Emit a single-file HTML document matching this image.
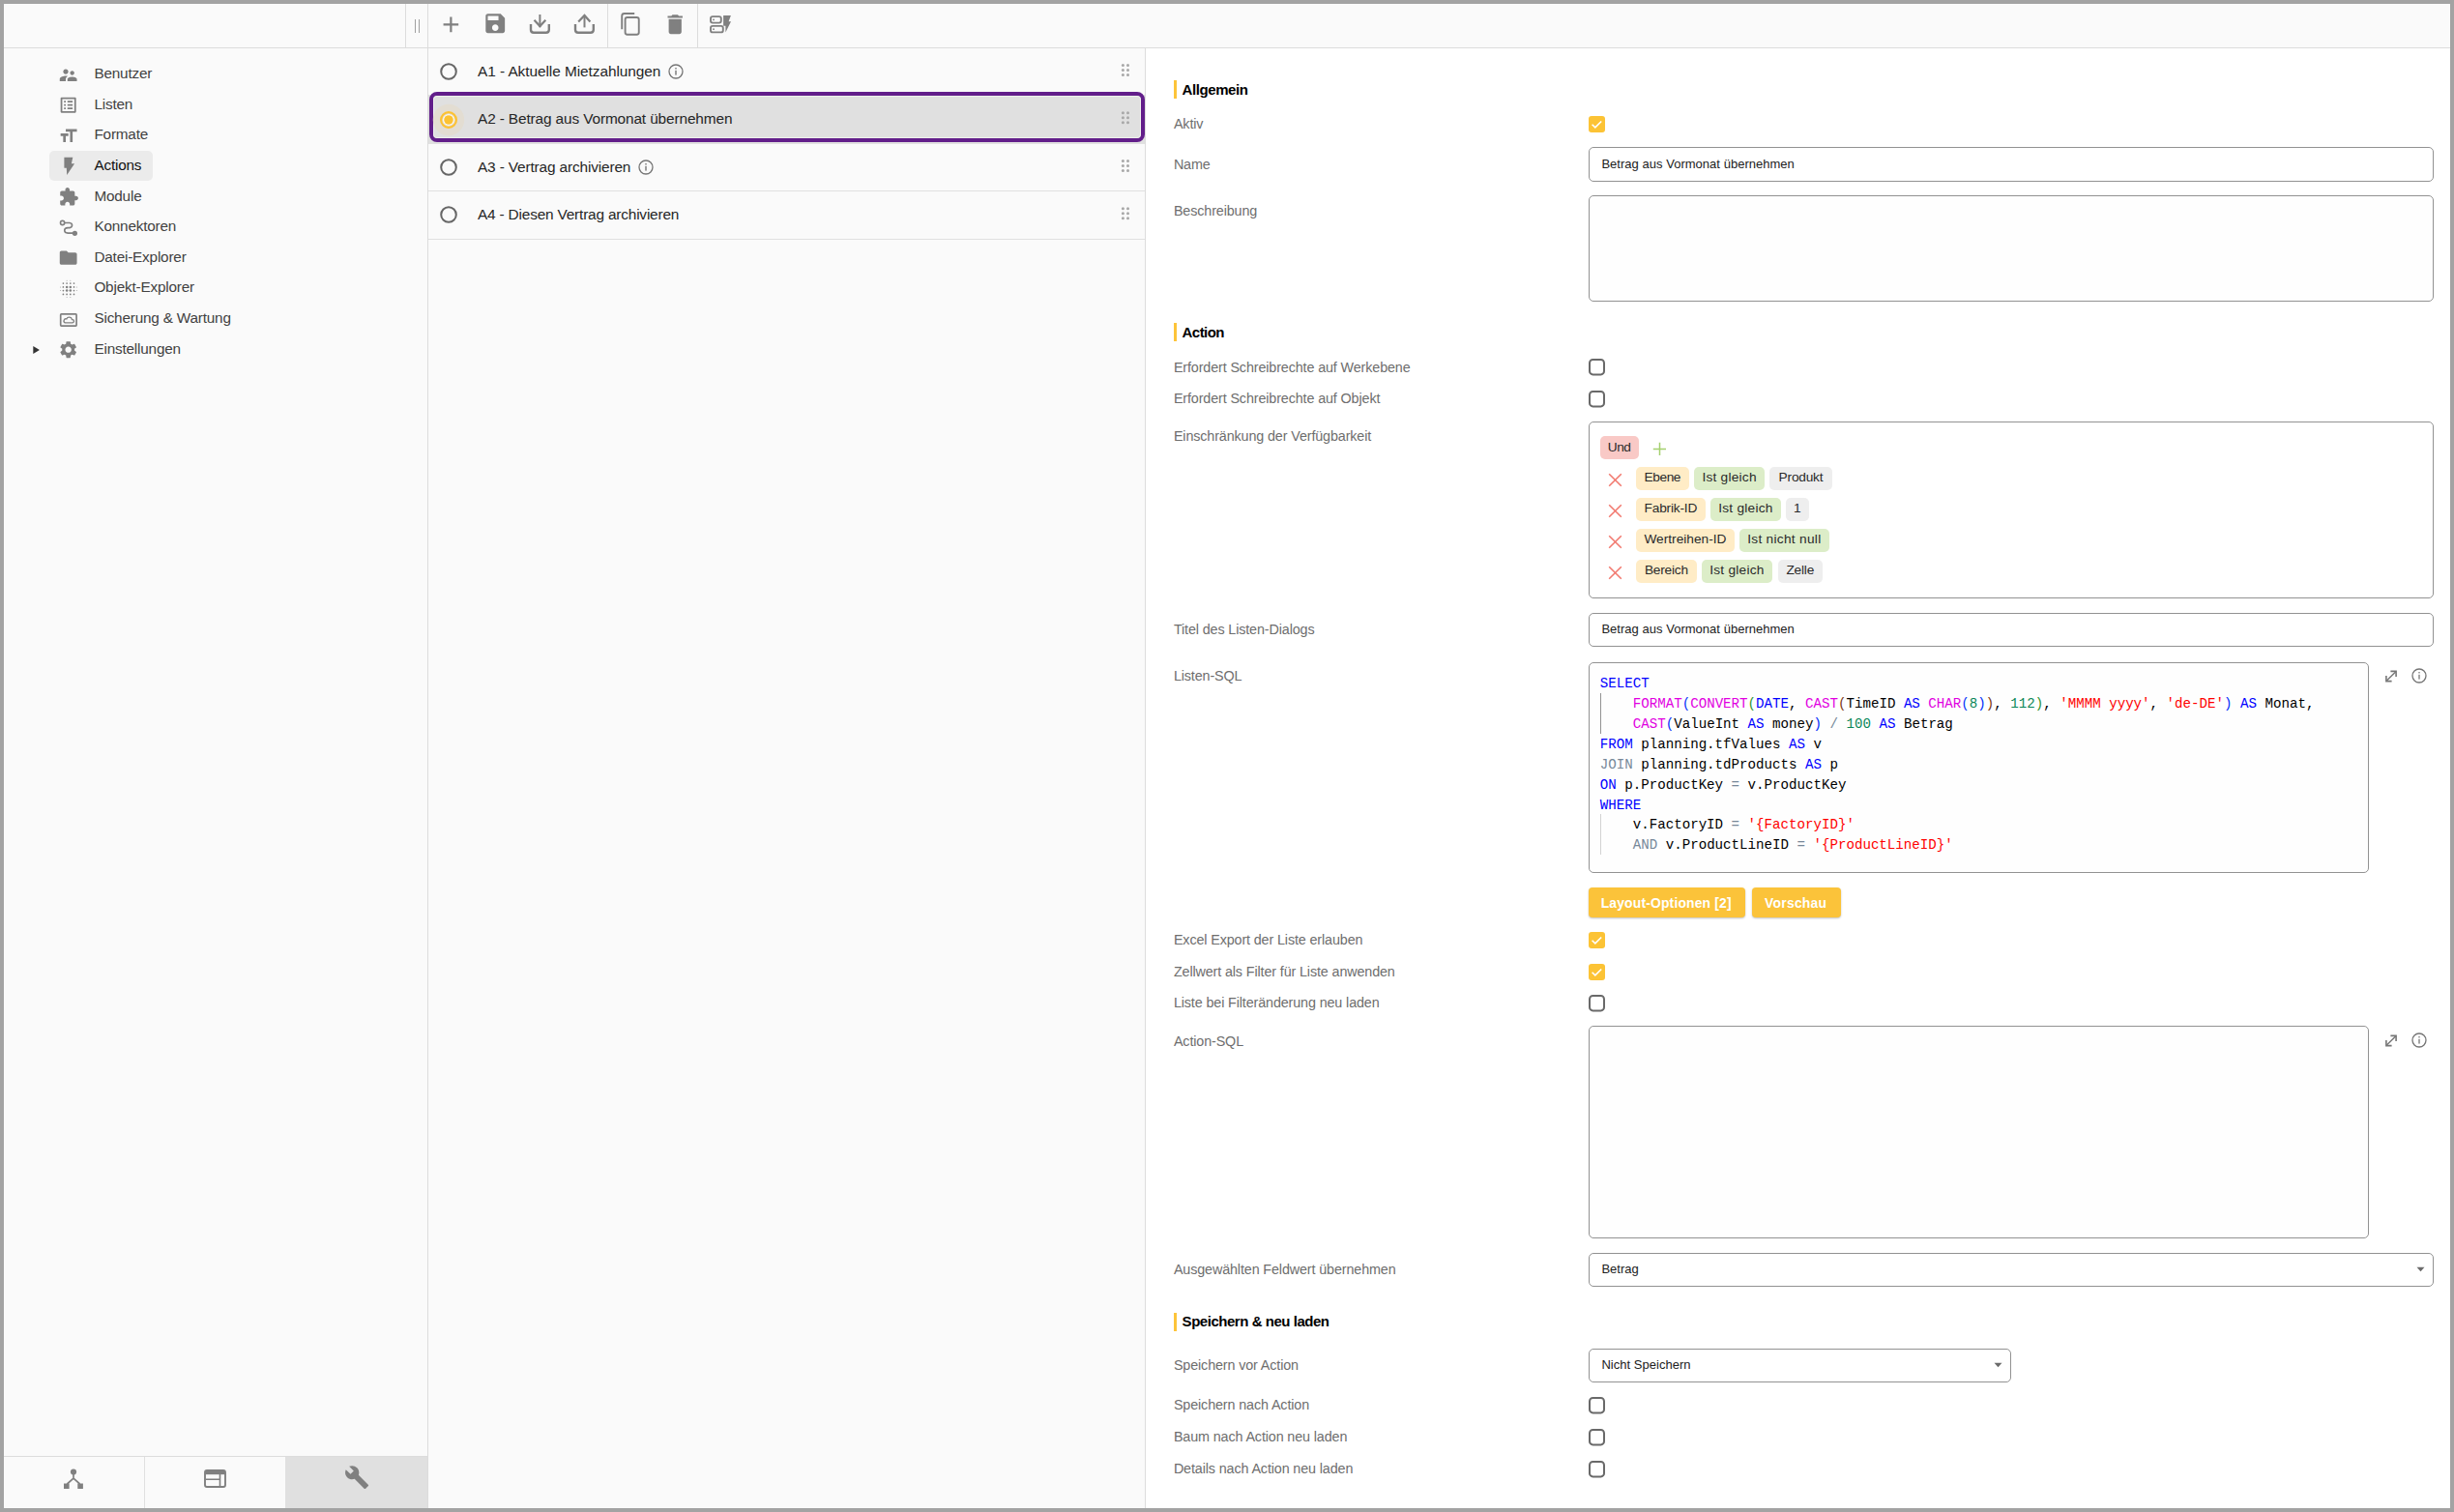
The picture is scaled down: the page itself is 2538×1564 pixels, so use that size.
<!DOCTYPE html>
<html><head><meta charset="utf-8"><style>
html,body{margin:0;padding:0;width:2538px;height:1564px;overflow:hidden;background:#a3a3a3;}
body{position:relative;font-family:"Liberation Sans",sans-serif;}
.b{position:absolute;}
.t{position:absolute;white-space:pre;line-height:0;}
svg.b{overflow:visible}
</style></head><body>
<div class="b" style="left:4px;top:4px;width:2530px;height:1556px;background:#ffffff"></div>
<div class="b" style="left:4px;top:4px;width:439px;height:1556px;background:#fafafa"></div>
<div class="b" style="left:443px;top:4px;width:741px;height:1556px;background:#fafafa"></div>
<div class="b" style="left:4px;top:4px;width:2530px;height:45px;background:#fafafa"></div>
<div class="b" style="left:4px;top:49px;width:2530px;height:1px;background:#dcdcdc"></div>
<div class="b" style="left:419px;top:4px;width:1px;height:45px;background:#dcdcdc"></div>
<div class="b" style="left:442px;top:4px;width:1px;height:1556px;background:#dcdcdc"></div>
<div class="b" style="left:628px;top:4px;width:1px;height:45px;background:#dcdcdc"></div>
<div class="b" style="left:721px;top:4px;width:1px;height:45px;background:#dcdcdc"></div>
<div class="b" style="left:1184px;top:50px;width:1px;height:1510px;background:#dcdcdc"></div>
<div class="b" style="left:429px;top:20px;width:1px;height:14px;background:#a0a0a0"></div>
<div class="b" style="left:433px;top:20px;width:1px;height:14px;background:#a0a0a0"></div>
<svg class="b" style="left:452.6px;top:11.8px" width="27" height="27" viewBox="0 0 24.24 24.24"><path fill="#808080" d="M19 13h-6v6h-2v-6H5v-2h6V5h2v6h6v2z"/></svg>
<svg class="b" style="left:498.8px;top:11.1px" width="27" height="27" viewBox="0 0 24.5 24.5"><path fill="#808080" d="M17 3H5c-1.11 0-2 .9-2 2v14c0 1.1.89 2 2 2h14c1.1 0 2-.9 2-2V7l-4-4zm-5 16c-1.66 0-3-1.34-3-3s1.34-3 3-3 3 1.34 3 3-1.34 3-3 3zm3-10H5V5h10v4z"/></svg>
<svg class="b" style="left:544px;top:10px" width="30" height="30" viewBox="0 0 30 30"><g fill="none" stroke="#808080" stroke-width="2"><path d="M14.4 5v13.2"/><path d="M8.5 10.8l5.9 6.3 5.9-6.3" stroke-width="2.2"/><path d="M5 15v5.7q0 3 3 3h12.8q3 0 3-3V15" stroke-width="2.4"/></g></svg>
<svg class="b" style="left:590px;top:10px" width="30" height="30" viewBox="0 0 30 30"><g fill="none" stroke="#808080" stroke-width="2"><path d="M14.5 6v12.4"/><path d="M8.2 12.5l6.3-6.6 5.9 6.6" stroke-width="2.2"/><path d="M5 15v5.7q0 3 3 3h12.8q3 0 3-3V15" stroke-width="2.4"/></g></svg>
<svg class="b" style="left:636px;top:8px" width="30" height="32" viewBox="0 0 30 32"><g fill="none" stroke="#808080" stroke-width="1.9"><path d="M7.2 22.2V8.5q0-2.5 2.5-2.5h10.5"/><rect x="10.6" y="10" width="14.15" height="17.75" rx="2.2"/></g></svg>
<svg class="b" style="left:684.8px;top:11.5px" width="27" height="27" viewBox="0 0 24.5 24.5"><path fill="#808080" d="M6 19c0 1.1.9 2 2 2h8c1.1 0 2-.9 2-2V7H6v12zM19 4h-3.5l-1-1h-5l-1 1H5v2h14V4z"/></svg>
<svg class="b" style="left:730px;top:12px" width="30" height="26" viewBox="0 0 30 26"><g fill="none" stroke="#808080" stroke-width="1.9"><rect x="5" y="5.1" width="10.8" height="6.5" rx="2"/><rect x="5" y="14.9" width="12.8" height="6.5" rx="2"/></g><rect x="7.2" y="7.6" width="1.6" height="1.6" fill="#808080"/><rect x="7.2" y="17.4" width="1.6" height="1.6" fill="#808080"/><path fill="#808080" d="M18.1 4.1h7.8l-2.3 6.2h2.4l-5.6 11.1v-6.6h-2.3z"/></svg>
<div class="b" style="left:51px;top:156px;width:107px;height:31px;background:#ebebeb;border-radius:5px"></div>
<div class="t" style="left:97.40px;top:76.10px;font-size:15.3px;color:#424242;letter-spacing:-0.183px;">Benutzer</div>
<div class="t" style="left:97.40px;top:107.70px;font-size:15.3px;color:#424242;letter-spacing:-0.183px;">Listen</div>
<div class="t" style="left:97.40px;top:139.30px;font-size:15.3px;color:#424242;letter-spacing:-0.183px;">Formate</div>
<div class="t" style="left:97.40px;top:170.90px;font-size:15.3px;color:#111111;letter-spacing:-0.183px;">Actions</div>
<div class="t" style="left:97.40px;top:202.50px;font-size:15.3px;color:#424242;letter-spacing:-0.183px;">Module</div>
<div class="t" style="left:97.40px;top:234.10px;font-size:15.3px;color:#424242;letter-spacing:-0.183px;">Konnektoren</div>
<div class="t" style="left:97.40px;top:265.70px;font-size:15.3px;color:#424242;letter-spacing:-0.183px;">Datei-Explorer</div>
<div class="t" style="left:97.40px;top:297.30px;font-size:15.3px;color:#424242;letter-spacing:-0.183px;">Objekt-Explorer</div>
<div class="t" style="left:97.40px;top:328.90px;font-size:15.3px;color:#424242;letter-spacing:-0.183px;">Sicherung &amp; Wartung</div>
<div class="t" style="left:97.40px;top:360.50px;font-size:15.3px;color:#424242;letter-spacing:-0.183px;">Einstellungen</div>
<svg class="b" style="left:60.332px;top:66.632px" width="21.34" height="21.34" viewBox="0 0 24 24"><path fill="#808080" d="M16.5 12c1.38 0 2.49-1.12 2.49-2.5S17.88 7 16.5 7C15.12 7 14 8.12 14 9.5s1.12 2.5 2.5 2.5zM9 11c1.66 0 2.99-1.34 2.99-3S10.66 5 9 5C7.34 5 6 6.34 6 8s1.34 3 3 3zm7.5 3c-1.83 0-5.5.92-5.5 2.75V19h11v-2.25c0-1.830-3.67-2.75-5.5-2.75zM9 13c-2.33 0-7 1.17-7 3.5V19h7v-2.25c0-.85.33-2.34 2.37-3.47C10.5 13.1 9.66 13 9 13z"/></svg>
<svg class="b" style="left:60.332px;top:98.232px" width="21.34" height="21.34" viewBox="0 0 24 24"><path fill="#808080" d="M19 5v14H5V5h14m1.1-2H3.9c-.5 0-.9.4-.9.9v16.2c0 .4.4.9.9.9h16.2c.4 0 .9-.5.9-.9V3.9c0-.5-.5-.9-.9-.9zM11 7h6v2h-6V7zm0 4h6v2h-6v-2zm0 4h6v2h-6zM7 7h2v2H7zm0 4h2v2H7zm0 4h2v2H7z"/></svg>
<svg class="b" style="left:60.332px;top:129.832px" width="21.34" height="21.34" viewBox="0 0 24 24"><path fill="#808080" d="M9 4v3h5v12h3V7h5V4H9zm-6 8h3v7h3v-7h3V9H3v3z"/></svg>
<svg class="b" style="left:0;top:0" width="443" height="400" viewBox="0 0 443 400"><polygon fill="#808080" points="66.4,162.7 75.3,162.7 73.9,169.3 77.1,169.3 69.2,180.9 68.8,173.75 66.4,173.75"/></svg>
<svg class="b" style="left:60.332px;top:193.03199999999998px" width="21.34" height="21.34" viewBox="-0.5 0 24 24"><path fill="#808080" d="M20.5 11H19V7c0-1.1-.9-2-2-2h-4V3.5C13 2.12 11.88 1 10.5 1S8 2.12 8 3.5V5H4c-1.1 0-1.99.9-1.99 2v3.8H3.5c1.49 0 2.7 1.21 2.7 2.7s-1.21 2.7-2.7 2.7H2V20c0 1.1.9 2 2 2h3.8v-1.5c0-1.49 1.21-2.7 2.7-2.7 1.49 0 2.7 1.21 2.7 2.7V22H17c1.1 0 2-.9 2-2v-4h1.5c1.38 0 2.5-1.12 2.5-2.5S21.88 11 20.5 11z"/></svg>
<svg class="b" style="left:0;top:0" width="443" height="400" viewBox="0 0 443 400"><g fill="none" stroke="#808080" stroke-width="1.6"><circle cx="64.6" cy="230.5" r="2.1"/><path d="M66.7 230.5h5.2a3.3 2.6 0 0 1 0 5.1h-1.8a3.3 2.7 0 0 0 0 5.5h5.6"/></g><circle cx="77.4" cy="241.3" r="2.6" fill="#808080"/></svg>
<svg class="b" style="left:60.332px;top:256.232px" width="21.34" height="21.34" viewBox="0 0 24 24"><path fill="#808080" d="M10 4H4c-1.1 0-1.99.9-1.99 2L2 18c0 1.1.9 2 2 2h16c1.1 0 2-.9 2-2V8c0-1.1-.9-2-2-2h-8l-2-2z"/></svg>
<svg class="b" style="left:0;top:0" width="443" height="400" viewBox="0 0 443 400"><circle cx="65.4" cy="293.1" r="0.85" fill="#808080"/><circle cx="65.4" cy="296.9" r="0.85" fill="#808080"/><circle cx="65.4" cy="300.6" r="0.85" fill="#808080"/><circle cx="65.4" cy="304.4" r="0.85" fill="#808080"/><circle cx="69.1" cy="293.1" r="0.85" fill="#808080"/><circle cx="69.1" cy="296.9" r="1.25" fill="#808080"/><circle cx="69.1" cy="300.6" r="1.25" fill="#808080"/><circle cx="69.1" cy="304.4" r="0.85" fill="#808080"/><circle cx="72.8" cy="293.1" r="0.85" fill="#808080"/><circle cx="72.8" cy="296.9" r="1.25" fill="#808080"/><circle cx="72.8" cy="300.6" r="1.25" fill="#808080"/><circle cx="72.8" cy="304.4" r="0.85" fill="#808080"/><circle cx="76.5" cy="293.1" r="0.85" fill="#808080"/><circle cx="76.5" cy="296.9" r="0.85" fill="#808080"/><circle cx="76.5" cy="300.6" r="0.85" fill="#808080"/><circle cx="76.5" cy="304.4" r="0.85" fill="#808080"/><circle cx="69.1" cy="290.2" r="0.5" fill="#808080" opacity="0.7"/><circle cx="72.8" cy="290.2" r="0.5" fill="#808080" opacity="0.7"/><circle cx="69.1" cy="307.4" r="0.5" fill="#808080" opacity="0.7"/><circle cx="72.8" cy="307.4" r="0.5" fill="#808080" opacity="0.7"/><circle cx="62.5" cy="296.9" r="0.5" fill="#808080" opacity="0.7"/><circle cx="62.5" cy="300.6" r="0.5" fill="#808080" opacity="0.7"/><circle cx="79.4" cy="296.9" r="0.5" fill="#808080" opacity="0.7"/><circle cx="79.4" cy="300.6" r="0.5" fill="#808080" opacity="0.7"/></svg>
<svg class="b" style="left:0;top:0" width="443" height="400" viewBox="0 0 443 400"><rect x="62.7" y="324.9" width="16.4" height="12.2" rx="0.8" fill="none" stroke="#808080" stroke-width="1.7"/><path d="M67.3 333.8h7.6a1.6 1.6 0 0 0 0-3.2h-.4a3 3 0 0 0-5.7-0.6a1.9 1.9 0 0 0-1.5 3.8z" fill="none" stroke="#808080" stroke-width="1.3"/></svg>
<svg class="b" style="left:60.332px;top:351.03200000000004px" width="21.34" height="21.34" viewBox="0 0 24 24"><path fill="#808080" d="M19.14 12.94c.04-.3.06-.61.06-.94 0-.32-.02-.64-.07-.94l2.03-1.58c.18-.14.23-.41.12-.61l-1.92-3.32c-.12-.22-.37-.29-.59-.22l-2.39.96c-.5-.38-1.03-.7-1.62-.94l-.36-2.54c-.04-.24-.24-.41-.48-.41h-3.84c-.24 0-.43.17-.47.41l-.36 2.54c-.59.24-1.13.57-1.62.94l-2.39-.96c-.22-.08-.47 0-.59.22L2.74 8.87c-.12.21-.08.47.12.61l2.03 1.58c-.05.3-.09.63-.09.94s.02.64.07.94l-2.03 1.58c-.18.14-.23.41-.12.61l1.92 3.32c.12.22.37.29.59.22l2.39-.96c.5.38 1.03.7 1.62.94l.36 2.54c.05.24.24.41.48.41h3.84c.24 0 .44-.17.47-.41l.36-2.54c.59-.24 1.13-.56 1.62-.94l2.39.96c.22.08.47 0 .59-.22l1.92-3.32c.12-.22.07-.47-.12-.61l-2.01-1.58zM12 15.6c-1.98 0-3.6-1.62-3.6-3.6s1.62-3.6 3.6-3.6 3.6 1.62 3.6 3.6-1.62 3.6-3.6 3.6z"/></svg>
<svg class="b" style="left:0;top:0" width="443" height="400" viewBox="0 0 443 400"><polygon fill="#333" points="34.3,357.9 40.9,362 34.3,366.1"/></svg>
<div class="b" style="left:4px;top:1506px;width:438px;height:1px;background:#dcdcdc"></div>
<div class="b" style="left:149px;top:1507px;width:1px;height:53px;background:#e0e0e0"></div>
<div class="b" style="left:295px;top:1507px;width:147px;height:53px;background:#e0e0e0"></div>
<svg class="b" style="left:0;top:1500px" width="443" height="60" viewBox="0 1500 443 60"><circle cx="76" cy="1522.5" r="3.1" fill="#808080"/><path d="M76 1524v5.2l-6.6 5.8M76 1529.2l6.6 5.8" fill="none" stroke="#808080" stroke-width="1.7"/><rect x="66" y="1534.5" width="5.6" height="5.5" fill="#808080"/><rect x="80.3" y="1534.5" width="5.6" height="5.5" fill="#808080"/></svg>
<svg class="b" style="left:0;top:1500px" width="443" height="60" viewBox="0 1500 443 60"><rect x="212" y="1521" width="21" height="17" rx="2" fill="none" stroke="#808080" stroke-width="1.9"/><rect x="212" y="1521" width="21" height="4.2" fill="#808080"/><path d="M213 1530.3h14.5M227.5 1525v13" stroke="#808080" stroke-width="1.6"/></svg>
<svg class="b" style="left:355.9px;top:1515px" width="26.2" height="26.2" viewBox="0 0 24 24"><path fill="#808080" d="M22.7 19l-9.1-9.1c.9-2.3.4-5-1.5-6.9-2-2-5-2.4-7.4-1.3L9 6 6 9 1.6 4.7C.4 7.1.9 10.1 2.9 12.1c1.9 1.9 4.6 2.4 6.9 1.5l9.1 9.1c.4.4 1 .4 1.4 0l2.3-2.3c.5-.4.5-1.1.1-1.4z"/></svg>
<div class="b" style="left:443px;top:98px;width:741px;height:50px;background:#e0e0e0"></div>
<div class="b" style="left:443px;top:148px;width:741px;height:1px;background:#e0e0e0"></div>
<div class="b" style="left:443px;top:197px;width:741px;height:1px;background:#e0e0e0"></div>
<div class="b" style="left:443px;top:247px;width:741px;height:1px;background:#e0e0e0"></div>
<div class="b" style="left:444px;top:95px;width:740px;height:52px;box-sizing:border-box;border:4px solid #621e8a;border-radius:8px"></div>
<div class="b" style="left:448px;top:99px;width:732px;height:44px;box-sizing:border-box;border:1px solid #eef0ec;border-radius:4px"></div>
<svg class="b" style="left:444px;top:54.1px" width="40" height="40" viewBox="-20 -20 40 40"><circle r="7.8" fill="none" stroke="#666" stroke-width="2"/></svg>
<div class="t" style="left:494.00px;top:73.76px;font-size:15.4px;color:#262626;letter-spacing:-0.053px;">A1 - Aktuelle Mietzahlungen</div>
<svg class="b" style="left:689.4px;top:64.1px" width="20" height="20" viewBox="-10 -10 20 20"><circle r="7" fill="none" stroke="#757575" stroke-width="1.3"/><rect x="-0.7" y="-1.2" width="1.4" height="4.8" fill="#757575"/><rect x="-0.7" y="-4" width="1.4" height="1.5" fill="#757575"/></svg>
<svg class="b" style="left:0;top:0" width="1184" height="260" viewBox="0 0 1184 260"><circle cx="1161.4" cy="67.5" r="1.5" fill="#a8a8a8"/><circle cx="1161.4" cy="72.5" r="1.5" fill="#a8a8a8"/><circle cx="1161.4" cy="77.5" r="1.5" fill="#a8a8a8"/><circle cx="1166.5" cy="67.5" r="1.5" fill="#a8a8a8"/><circle cx="1166.5" cy="72.5" r="1.5" fill="#a8a8a8"/><circle cx="1166.5" cy="77.5" r="1.5" fill="#a8a8a8"/></svg>
<svg class="b" style="left:444px;top:104.0px" width="40" height="40" viewBox="-20 -20 40 40"><circle r="16.2" fill="#e3ddd2"/><circle r="7.9" fill="none" stroke="#fcc233" stroke-width="2.2"/><circle r="5.8" fill="#fff"/><circle r="4.8" fill="#fcc233"/></svg>
<div class="t" style="left:494.00px;top:123.06px;font-size:15.4px;color:#262626;letter-spacing:-0.128px;">A2 - Betrag aus Vormonat übernehmen</div>
<svg class="b" style="left:0;top:0" width="1184" height="260" viewBox="0 0 1184 260"><circle cx="1161.4" cy="116.8" r="1.5" fill="#a8a8a8"/><circle cx="1161.4" cy="121.8" r="1.5" fill="#a8a8a8"/><circle cx="1161.4" cy="126.8" r="1.5" fill="#a8a8a8"/><circle cx="1166.5" cy="116.8" r="1.5" fill="#a8a8a8"/><circle cx="1166.5" cy="121.8" r="1.5" fill="#a8a8a8"/><circle cx="1166.5" cy="126.8" r="1.5" fill="#a8a8a8"/></svg>
<svg class="b" style="left:444px;top:153.0px" width="40" height="40" viewBox="-20 -20 40 40"><circle r="7.8" fill="none" stroke="#666" stroke-width="2"/></svg>
<div class="t" style="left:494.00px;top:172.66px;font-size:15.4px;color:#262626;letter-spacing:-0.142px;">A3 - Vertrag archivieren</div>
<svg class="b" style="left:658.0px;top:163.0px" width="20" height="20" viewBox="-10 -10 20 20"><circle r="7" fill="none" stroke="#757575" stroke-width="1.3"/><rect x="-0.7" y="-1.2" width="1.4" height="4.8" fill="#757575"/><rect x="-0.7" y="-4" width="1.4" height="1.5" fill="#757575"/></svg>
<svg class="b" style="left:0;top:0" width="1184" height="260" viewBox="0 0 1184 260"><circle cx="1161.4" cy="166.4" r="1.5" fill="#a8a8a8"/><circle cx="1161.4" cy="171.4" r="1.5" fill="#a8a8a8"/><circle cx="1161.4" cy="176.4" r="1.5" fill="#a8a8a8"/><circle cx="1166.5" cy="166.4" r="1.5" fill="#a8a8a8"/><circle cx="1166.5" cy="171.4" r="1.5" fill="#a8a8a8"/><circle cx="1166.5" cy="176.4" r="1.5" fill="#a8a8a8"/></svg>
<svg class="b" style="left:444px;top:202.3px" width="40" height="40" viewBox="-20 -20 40 40"><circle r="7.8" fill="none" stroke="#666" stroke-width="2"/></svg>
<div class="t" style="left:494.00px;top:221.96px;font-size:15.4px;color:#262626;letter-spacing:-0.183px;">A4 - Diesen Vertrag archivieren</div>
<svg class="b" style="left:0;top:0" width="1184" height="260" viewBox="0 0 1184 260"><circle cx="1161.4" cy="215.7" r="1.5" fill="#a8a8a8"/><circle cx="1161.4" cy="220.7" r="1.5" fill="#a8a8a8"/><circle cx="1161.4" cy="225.7" r="1.5" fill="#a8a8a8"/><circle cx="1166.5" cy="215.7" r="1.5" fill="#a8a8a8"/><circle cx="1166.5" cy="220.7" r="1.5" fill="#a8a8a8"/><circle cx="1166.5" cy="225.7" r="1.5" fill="#a8a8a8"/></svg>
<div class="b" style="left:1214px;top:83px;width:3px;height:19px;background:#fdc43a"></div>
<div class="t" style="left:1222.60px;top:92.80px;font-size:15.0px;color:#000;font-weight:bold;letter-spacing:-0.425px;">Allgemein</div>
<div class="b" style="left:1214px;top:334px;width:3px;height:19px;background:#fdc43a"></div>
<div class="t" style="left:1222.60px;top:344.30px;font-size:15.0px;color:#000;font-weight:bold;letter-spacing:-0.570px;">Action</div>
<div class="b" style="left:1214px;top:1358px;width:3px;height:19px;background:#fdc43a"></div>
<div class="t" style="left:1222.60px;top:1367.30px;font-size:15.0px;color:#000;font-weight:bold;letter-spacing:-0.465px;">Speichern &amp; neu laden</div>
<div class="t" style="left:1213.90px;top:128.02px;font-size:14.35px;color:#6e6e6e;letter-spacing:-0.125px;">Aktiv</div>
<svg class="b" style="left:1643px;top:120.0px" width="17" height="17" viewBox="0 0 17 17"><rect width="17" height="17" rx="3" fill="#fcc335"/><path d="M3.6 8.8l3.2 3.1 6.4-6.4" fill="none" stroke="#fff" stroke-width="1.6"/></svg>
<div class="t" style="left:1213.90px;top:170.42px;font-size:14.35px;color:#6e6e6e;letter-spacing:-0.125px;">Name</div>
<div class="b" style="left:1643px;top:152px;width:874px;height:36px;box-sizing:border-box;border:1px solid #929292;border-radius:5px;background:#fff"></div>
<div class="t" style="left:1656.40px;top:170.49px;font-size:13.0px;color:#212121;letter-spacing:0.025px;">Betrag aus Vormonat übernehmen</div>
<div class="t" style="left:1213.90px;top:218.32px;font-size:14.35px;color:#6e6e6e;letter-spacing:-0.125px;">Beschreibung</div>
<div class="b" style="left:1643px;top:202px;width:874px;height:110px;box-sizing:border-box;border:1px solid #929292;border-radius:5px;background:#fefefe"></div>
<div class="t" style="left:1213.90px;top:380.22px;font-size:14.35px;color:#6e6e6e;letter-spacing:-0.125px;">Erfordert Schreibrechte auf Werkebene</div>
<svg class="b" style="left:1643px;top:371.3px" width="17" height="17.4" viewBox="0 0 17 17.4"><rect x="1" y="1" width="15" height="15.4" rx="3.4" fill="#fff" stroke="#696969" stroke-width="2"/></svg>
<div class="t" style="left:1213.90px;top:411.82px;font-size:14.35px;color:#6e6e6e;letter-spacing:-0.125px;">Erfordert Schreibrechte auf Objekt</div>
<svg class="b" style="left:1643px;top:403.6px" width="17" height="17.4" viewBox="0 0 17 17.4"><rect x="1" y="1" width="15" height="15.4" rx="3.4" fill="#fff" stroke="#696969" stroke-width="2"/></svg>
<div class="t" style="left:1213.90px;top:450.52px;font-size:14.35px;color:#6e6e6e;letter-spacing:-0.125px;">Einschränkung der Verfügbarkeit</div>
<div class="b" style="left:1643px;top:436px;width:874px;height:183px;box-sizing:border-box;border:1px solid #929292;border-radius:5px;background:#fff"></div>
<div class="b" style="left:1655px;top:451.2px;width:40px;height:23.5px;background:#f9c9c6;border-radius:5px"></div>
<div class="t" style="left:1662.70px;top:463.25px;font-size:13.7px;color:#2a2a2a;letter-spacing:-0.420px;">Und</div>
<svg class="b" style="left:1708px;top:456px" width="17" height="17" viewBox="0 0 17 17"><path d="M8.5 1.8v13.2M1.8 8.5h13.2" stroke="#a5d06f" stroke-width="1.5"/></svg>
<svg class="b" style="left:1662px;top:488.0px" width="17" height="17" viewBox="0 0 17 17"><path d="M2.2 2.2l12.6 12.6M14.8 2.2L2.2 14.8" stroke="#f27a70" stroke-width="1.6"/></svg>
<div class="b" style="left:1692.2px;top:483.2px;width:54.7px;height:23.5px;background:#ffecc6;border-radius:5px"></div>
<div class="t" style="left:1700.40px;top:494.05px;font-size:13.7px;color:#2a2a2a;letter-spacing:-0.373px;">Ebene</div>
<div class="b" style="left:1752.2px;top:483.2px;width:72.7px;height:23.5px;background:#dcedc8;border-radius:5px"></div>
<div class="t" style="left:1760.40px;top:494.05px;font-size:13.7px;color:#2a2a2a;letter-spacing:0.239px;">Ist gleich</div>
<div class="b" style="left:1830.2px;top:483.2px;width:64.8px;height:23.5px;background:#eeeeee;border-radius:5px"></div>
<div class="t" style="left:1839.60px;top:494.05px;font-size:13.7px;color:#2a2a2a;letter-spacing:-0.200px;">Produkt</div>
<svg class="b" style="left:1662px;top:520.1px" width="17" height="17" viewBox="0 0 17 17"><path d="M2.2 2.2l12.6 12.6M14.8 2.2L2.2 14.8" stroke="#f27a70" stroke-width="1.6"/></svg>
<div class="b" style="left:1692.2px;top:515.3px;width:71.5px;height:23.5px;background:#ffecc6;border-radius:5px"></div>
<div class="t" style="left:1700.60px;top:526.15px;font-size:13.7px;color:#2a2a2a;letter-spacing:-0.200px;">Fabrik-ID</div>
<div class="b" style="left:1769.0px;top:515.3px;width:72.7px;height:23.5px;background:#dcedc8;border-radius:5px"></div>
<div class="t" style="left:1777.20px;top:526.15px;font-size:13.7px;color:#2a2a2a;letter-spacing:0.239px;">Ist gleich</div>
<div class="b" style="left:1847.0px;top:515.3px;width:23.8px;height:23.5px;background:#eeeeee;border-radius:5px"></div>
<div class="t" style="left:1855.10px;top:526.15px;font-size:13.7px;color:#2a2a2a;">1</div>
<svg class="b" style="left:1662px;top:551.8px" width="17" height="17" viewBox="0 0 17 17"><path d="M2.2 2.2l12.6 12.6M14.8 2.2L2.2 14.8" stroke="#f27a70" stroke-width="1.6"/></svg>
<div class="b" style="left:1692.2px;top:547.0px;width:101.5px;height:23.5px;background:#ffecc6;border-radius:5px"></div>
<div class="t" style="left:1700.40px;top:557.85px;font-size:13.7px;color:#2a2a2a;letter-spacing:0.008px;">Wertreihen-ID</div>
<div class="b" style="left:1799.0px;top:547.0px;width:93.0px;height:23.5px;background:#dcedc8;border-radius:5px"></div>
<div class="t" style="left:1807.20px;top:557.85px;font-size:13.7px;color:#2a2a2a;letter-spacing:0.290px;">Ist nicht null</div>
<svg class="b" style="left:1662px;top:583.8px" width="17" height="17" viewBox="0 0 17 17"><path d="M2.2 2.2l12.6 12.6M14.8 2.2L2.2 14.8" stroke="#f27a70" stroke-width="1.6"/></svg>
<div class="b" style="left:1692.2px;top:579.0px;width:62.6px;height:23.5px;background:#ffecc6;border-radius:5px"></div>
<div class="t" style="left:1700.88px;top:589.85px;font-size:13.7px;color:#2a2a2a;letter-spacing:-0.200px;">Bereich</div>
<div class="b" style="left:1760.0px;top:579.0px;width:72.8px;height:23.5px;background:#dcedc8;border-radius:5px"></div>
<div class="t" style="left:1768.20px;top:589.85px;font-size:13.7px;color:#2a2a2a;letter-spacing:0.239px;">Ist gleich</div>
<div class="b" style="left:1839.0px;top:579.0px;width:45.7px;height:23.5px;background:#eeeeee;border-radius:5px"></div>
<div class="t" style="left:1847.39px;top:589.85px;font-size:13.7px;color:#2a2a2a;letter-spacing:-0.200px;">Zelle</div>
<div class="t" style="left:1213.90px;top:651.32px;font-size:14.35px;color:#6e6e6e;letter-spacing:-0.125px;">Titel des Listen-Dialogs</div>
<div class="b" style="left:1643px;top:634px;width:874px;height:35px;box-sizing:border-box;border:1px solid #929292;border-radius:5px;background:#fff"></div>
<div class="t" style="left:1656.40px;top:651.49px;font-size:13.0px;color:#212121;letter-spacing:0.025px;">Betrag aus Vormonat übernehmen</div>
<div class="t" style="left:1213.90px;top:699.02px;font-size:14.35px;color:#6e6e6e;letter-spacing:-0.125px;">Listen-SQL</div>
<div class="b" style="left:1643px;top:685px;width:807px;height:218px;box-sizing:border-box;border:1px solid #929292;border-radius:5px;background:#fefefe"></div>
<svg class="b" style="left:2462.5px;top:688.8px" width="20" height="20" viewBox="-10 -10 20 20"><g transform="translate(0 0.5)"><path d="M-4.6 4.6L4.6-4.6" stroke="#777" stroke-width="1.45"/><path d="M-0.6-5.1H5.1V0.6M-5.1-0.6V5.1H0.6" fill="none" stroke="#777" stroke-width="1.6"/></g></svg>
<svg class="b" style="left:2492.4px;top:688.8px" width="20" height="20" viewBox="-10 -10 20 20"><circle r="7" fill="none" stroke="#757575" stroke-width="1.3"/><rect x="-0.65" y="-1.2" width="1.3" height="4.8" fill="#757575"/><rect x="-0.65" y="-4" width="1.3" height="1.4" fill="#757575"/></svg>
<div class="t" style="left:1654.8px;top:707.34px;font-family:'Liberation Mono',monospace;font-size:14.15px;letter-spacing:0.000px"><span style="color:#0000ff">SELECT</span></div>
<div class="t" style="left:1654.8px;top:728.21px;font-family:'Liberation Mono',monospace;font-size:14.15px;letter-spacing:0.000px"><span style="color:#000000">&nbsp;&nbsp;&nbsp;&nbsp;</span><span style="color:#e100e1">FORMAT</span><span style="color:#0431fa">(</span><span style="color:#e100e1">CONVERT</span><span style="color:#319331">(</span><span style="color:#0000ff">DATE</span><span style="color:#000000">,&nbsp;</span><span style="color:#e100e1">CAST</span><span style="color:#7b3814">(</span><span style="color:#000000">TimeID&nbsp;</span><span style="color:#0000ff">AS</span><span style="color:#000000">&nbsp;</span><span style="color:#e100e1">CHAR</span><span style="color:#0431fa">(</span><span style="color:#098658">8</span><span style="color:#0431fa">)</span><span style="color:#7b3814">)</span><span style="color:#000000">,&nbsp;</span><span style="color:#098658">112</span><span style="color:#319331">)</span><span style="color:#000000">,&nbsp;</span><span style="color:#ff0000">'MMMM&nbsp;yyyy'</span><span style="color:#000000">,&nbsp;</span><span style="color:#ff0000">'de-DE'</span><span style="color:#0431fa">)</span><span style="color:#000000">&nbsp;</span><span style="color:#0000ff">AS</span><span style="color:#000000">&nbsp;Monat,</span></div>
<div class="t" style="left:1654.8px;top:749.08px;font-family:'Liberation Mono',monospace;font-size:14.15px;letter-spacing:0.000px"><span style="color:#000000">&nbsp;&nbsp;&nbsp;&nbsp;</span><span style="color:#e100e1">CAST</span><span style="color:#0431fa">(</span><span style="color:#000000">ValueInt&nbsp;</span><span style="color:#0000ff">AS</span><span style="color:#000000">&nbsp;money</span><span style="color:#0431fa">)</span><span style="color:#000000">&nbsp;</span><span style="color:#778899">/</span><span style="color:#000000">&nbsp;</span><span style="color:#098658">100</span><span style="color:#000000">&nbsp;</span><span style="color:#0000ff">AS</span><span style="color:#000000">&nbsp;Betrag</span></div>
<div class="t" style="left:1654.8px;top:769.95px;font-family:'Liberation Mono',monospace;font-size:14.15px;letter-spacing:0.000px"><span style="color:#0000ff">FROM</span><span style="color:#000000">&nbsp;planning.tfValues&nbsp;</span><span style="color:#0000ff">AS</span><span style="color:#000000">&nbsp;v</span></div>
<div class="t" style="left:1654.8px;top:790.82px;font-family:'Liberation Mono',monospace;font-size:14.15px;letter-spacing:0.000px"><span style="color:#778899">JOIN</span><span style="color:#000000">&nbsp;planning.tdProducts&nbsp;</span><span style="color:#0000ff">AS</span><span style="color:#000000">&nbsp;p</span></div>
<div class="t" style="left:1654.8px;top:811.69px;font-family:'Liberation Mono',monospace;font-size:14.15px;letter-spacing:0.000px"><span style="color:#0000ff">ON</span><span style="color:#000000">&nbsp;p.ProductKey&nbsp;</span><span style="color:#778899">=</span><span style="color:#000000">&nbsp;v.ProductKey</span></div>
<div class="t" style="left:1654.8px;top:832.56px;font-family:'Liberation Mono',monospace;font-size:14.15px;letter-spacing:0.000px"><span style="color:#0000ff">WHERE</span></div>
<div class="t" style="left:1654.8px;top:853.43px;font-family:'Liberation Mono',monospace;font-size:14.15px;letter-spacing:0.000px"><span style="color:#000000">&nbsp;&nbsp;&nbsp;&nbsp;v.FactoryID&nbsp;</span><span style="color:#778899">=</span><span style="color:#000000">&nbsp;</span><span style="color:#ff0000">'{FactoryID}'</span></div>
<div class="t" style="left:1654.8px;top:874.30px;font-family:'Liberation Mono',monospace;font-size:14.15px;letter-spacing:0.000px"><span style="color:#000000">&nbsp;&nbsp;&nbsp;&nbsp;</span><span style="color:#778899">AND</span><span style="color:#000000">&nbsp;v.ProductLineID&nbsp;</span><span style="color:#778899">=</span><span style="color:#000000">&nbsp;</span><span style="color:#ff0000">'{ProductLineID}'</span></div>
<div class="b" style="left:1655px;top:717px;width:1px;height:42px;background:#939393"></div>
<div class="b" style="left:1655px;top:842px;width:1px;height:42px;background:#d3d3d3"></div>
<div class="b" style="left:1643px;top:918px;width:161.5px;height:31px;background:#fbc33a;border-radius:4px;box-shadow:0 1px 2px rgba(0,0,0,0.25)"></div>
<div class="t" style="left:1655.70px;top:933.88px;font-size:13.9px;color:#ffffff;font-weight:bold;letter-spacing:0.164px;">Layout-Optionen [2]</div>
<div class="b" style="left:1812.4px;top:918px;width:91.19999999999982px;height:31px;background:#fbc33a;border-radius:4px;box-shadow:0 1px 2px rgba(0,0,0,0.25)"></div>
<div class="t" style="left:1825.10px;top:933.88px;font-size:13.9px;color:#ffffff;font-weight:bold;letter-spacing:0.237px;">Vorschau</div>
<div class="t" style="left:1213.90px;top:971.82px;font-size:14.35px;color:#6e6e6e;letter-spacing:-0.125px;">Excel Export der Liste erlauben</div>
<svg class="b" style="left:1643px;top:963.6px" width="17" height="17" viewBox="0 0 17 17"><rect width="17" height="17" rx="3" fill="#fcc335"/><path d="M3.6 8.8l3.2 3.1 6.4-6.4" fill="none" stroke="#fff" stroke-width="1.6"/></svg>
<div class="t" style="left:1213.90px;top:1005.02px;font-size:14.35px;color:#6e6e6e;letter-spacing:-0.125px;">Zellwert als Filter für Liste anwenden</div>
<svg class="b" style="left:1643px;top:996.5px" width="17" height="17" viewBox="0 0 17 17"><rect width="17" height="17" rx="3" fill="#fcc335"/><path d="M3.6 8.8l3.2 3.1 6.4-6.4" fill="none" stroke="#fff" stroke-width="1.6"/></svg>
<div class="t" style="left:1213.90px;top:1037.02px;font-size:14.35px;color:#6e6e6e;letter-spacing:-0.125px;">Liste bei Filteränderung neu laden</div>
<svg class="b" style="left:1643px;top:1029.3px" width="17" height="17.4" viewBox="0 0 17 17.4"><rect x="1" y="1" width="15" height="15.4" rx="3.4" fill="#fff" stroke="#696969" stroke-width="2"/></svg>
<div class="t" style="left:1213.90px;top:1076.92px;font-size:14.35px;color:#6e6e6e;letter-spacing:-0.125px;">Action-SQL</div>
<div class="b" style="left:1643px;top:1061px;width:807px;height:220px;box-sizing:border-box;border:1px solid #929292;border-radius:5px;background:#fefefe"></div>
<svg class="b" style="left:2462.5px;top:1066.3px" width="20" height="20" viewBox="-10 -10 20 20"><g transform="translate(0 0.5)"><path d="M-4.6 4.6L4.6-4.6" stroke="#777" stroke-width="1.45"/><path d="M-0.6-5.1H5.1V0.6M-5.1-0.6V5.1H0.6" fill="none" stroke="#777" stroke-width="1.6"/></g></svg>
<svg class="b" style="left:2492.4px;top:1066.3px" width="20" height="20" viewBox="-10 -10 20 20"><circle r="7" fill="none" stroke="#757575" stroke-width="1.3"/><rect x="-0.65" y="-1.2" width="1.3" height="4.8" fill="#757575"/><rect x="-0.65" y="-4" width="1.3" height="1.4" fill="#757575"/></svg>
<div class="t" style="left:1213.90px;top:1313.12px;font-size:14.35px;color:#6e6e6e;letter-spacing:-0.125px;">Ausgewählten Feldwert übernehmen</div>
<div class="b" style="left:1643px;top:1295.5px;width:874px;height:35.0px;box-sizing:border-box;border:1px solid #929292;border-radius:5px;background:#fff"></div>
<div class="t" style="left:1656.40px;top:1313.29px;font-size:13.0px;color:#212121;letter-spacing:0.025px;">Betrag</div>
<svg class="b" style="left:2498px;top:1309px" width="11" height="8" viewBox="0 0 11 8"><polygon points="1.5,1.7 9.5,1.7 5.5,6.2" fill="#6b6b6b"/></svg>
<div class="t" style="left:1213.90px;top:1411.92px;font-size:14.35px;color:#6e6e6e;letter-spacing:-0.125px;">Speichern vor Action</div>
<div class="b" style="left:1643px;top:1394.5px;width:437px;height:35.0px;box-sizing:border-box;border:1px solid #929292;border-radius:5px;background:#fff"></div>
<div class="t" style="left:1656.40px;top:1412.09px;font-size:13.0px;color:#212121;letter-spacing:0.025px;">Nicht Speichern</div>
<svg class="b" style="left:2060.5px;top:1408px" width="11" height="8" viewBox="0 0 11 8"><polygon points="1.5,1.7 9.5,1.7 5.5,6.2" fill="#6b6b6b"/></svg>
<div class="t" style="left:1213.90px;top:1452.62px;font-size:14.35px;color:#6e6e6e;letter-spacing:-0.125px;">Speichern nach Action</div>
<svg class="b" style="left:1643px;top:1445.0px" width="17" height="17.4" viewBox="0 0 17 17.4"><rect x="1" y="1" width="15" height="15.4" rx="3.4" fill="#fff" stroke="#696969" stroke-width="2"/></svg>
<div class="t" style="left:1213.90px;top:1485.92px;font-size:14.35px;color:#6e6e6e;letter-spacing:-0.125px;">Baum nach Action neu laden</div>
<svg class="b" style="left:1643px;top:1477.8px" width="17" height="17.4" viewBox="0 0 17 17.4"><rect x="1" y="1" width="15" height="15.4" rx="3.4" fill="#fff" stroke="#696969" stroke-width="2"/></svg>
<div class="t" style="left:1213.90px;top:1519.32px;font-size:14.35px;color:#6e6e6e;letter-spacing:-0.125px;">Details nach Action neu laden</div>
<svg class="b" style="left:1643px;top:1510.5px" width="17" height="17.4" viewBox="0 0 17 17.4"><rect x="1" y="1" width="15" height="15.4" rx="3.4" fill="#fff" stroke="#696969" stroke-width="2"/></svg>
</body></html>
